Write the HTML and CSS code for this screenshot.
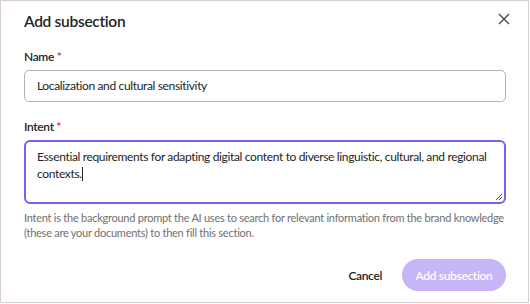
FILE: index.html
```html
<!DOCTYPE html>
<html lang="en">
<head>
    <meta charset="UTF-8">
    <title>Add subsection</title>
    <link rel="stylesheet" href="styles.css">
</head>
<body>
    <div class="dialog">
        <div class="dialog-header">
            <h2 class="dialog-title">Add subsection</h2>
            <button class="close-btn" aria-label="Close">
                <svg width="12" height="12" viewBox="0 0 12 12"><path d="M1 1L11 11M11 1L1 11" stroke="#424242" stroke-width="1.3" fill="none"/></svg>
            </button>
        </div>

        <div class="field">
            <label class="field-label">Name <span class="req">*</span></label>
            <div class="input">Localization and cultural sensitivity</div>
        </div>

        <div class="field">
            <label class="field-label">Intent <span class="req">*</span></label>
            <div class="textarea">
                Essential requirements for adapting digital content to diverse linguistic, cultural, and regional contexts.<span class="caret"></span>
                <svg class="grip" width="8" height="8" viewBox="0 0 8 8"><path d="M7 1L1 7M7 4L4 7" stroke="#555" stroke-width="1" fill="none"/></svg>
            </div>
            <p class="hint">Intent is the background prompt the AI uses to search for relevant information from the brand knowledge (these are your documents) to then fill this section.</p>
        </div>

        <div class="dialog-actions">
            <button class="btn-cancel">Cancel</button>
            <button class="btn-primary" disabled>Add subsection</button>
        </div>
    </div>
</body>
</html>
```

FILE: styles.css
```css
/* ベース */
body {
    margin: 0;
    background: #fff;
    font-family: Lato, "Open Sans", sans-serif;
    color: #242424;
    letter-spacing: -0.35px;
}

/* ダイアログ枠 */
.dialog {
    box-sizing: border-box;
    width: 529px;
    height: 303px;
    border: 1px solid #dacdd0;
    padding: 9px 22px 0 23px;
    display: flex;
    flex-direction: column;
}

.dialog-header {
    display: flex;
    justify-content: space-between;
    align-items: flex-start;
    height: 22px;
}

.dialog-title {
    margin: 0;
    font-size: 15.5px;
    line-height: 22px;
    font-weight: 600;
    letter-spacing: -0.3px;
}

.close-btn {
    background: none;
    border: none;
    padding: 0;
    width: 16px;
    height: 16px;
    display: flex;
    align-items: center;
    justify-content: center;
    margin: 1px -6px 0 0;
}

/* フォーム */
.field {
    display: flex;
    flex-direction: column;
}

.field-label {
    font-size: 12px;
    font-weight: 600;
    margin-top: 17px;
    margin-bottom: 5px;
    line-height: 16px;
}

.req {
    color: #c4314b;
}

.input {
    box-sizing: border-box;
    height: 32px;
    border: 1px solid #b3b3b3;
    border-radius: 5px;
    padding: 0 12px;
    font-size: 12px;
    line-height: 30px;
}

.textarea {
    position: relative;
    box-sizing: border-box;
    height: 64px;
    border: 2px solid #7f5ff0;
    border-radius: 6px;
    padding: 6px 11px;
    font-size: 12px;
    line-height: 17px;
}

.caret {
    display: inline-block;
    width: 1px;
    height: 14px;
    background: #242424;
    vertical-align: -3px;
}

.grip {
    position: absolute;
    right: 1px;
    bottom: 1px;
}

.hint {
    margin: 6px 0 0;
    font-size: 11px;
    line-height: 15px;
    letter-spacing: -0.25px;
    color: #707070;
}

/* ボタン */
.dialog-actions {
    margin-top: auto;
    margin-bottom: 11px;
    display: flex;
    justify-content: flex-end;
    align-items: center;
    gap: 8px;
}

.btn-cancel {
    background: none;
    border: none;
    font-family: inherit;
    letter-spacing: inherit;
    font-size: 12px;
    font-weight: 600;
    color: #242424;
    padding: 0 12px;
    height: 32px;
}

.btn-primary {
    background: #c6b5f7;
    color: #fff;
    border: none;
    border-radius: 16px;
    font-family: inherit;
    letter-spacing: inherit;
    font-size: 12px;
    font-weight: 600;
    height: 32px;
    width: 104px;
    padding: 0;
}
```
